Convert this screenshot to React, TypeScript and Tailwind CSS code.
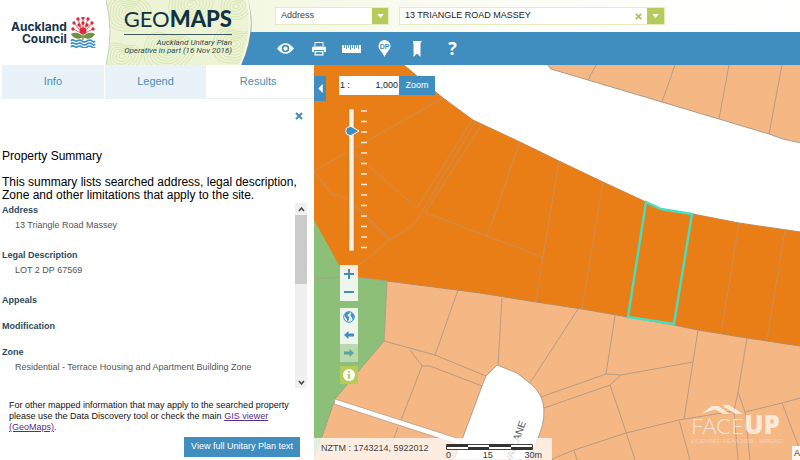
import { useState, type ReactNode } from "react";

type Detail = { label: string; value?: string };

const DETAILS: Detail[] = [
  { label: "Address", value: "13 Triangle Road Massey" },
  { label: "Legal Description", value: "LOT 2 DP 67569" },
  { label: "Appeals" },
  { label: "Modification" },
  { label: "Zone", value: "Residential - Terrace Housing and Apartment Building Zone" },
];

const TABS = ["Info", "Legend", "Results"];

// centre x, centre y, number of rings
const HILLS = [
  [22, 12, 7],
  [62, 50, 8],
  [84, 4, 7],
  [128, 44, 7],
  [16, 56, 6],
  [130, 6, 5],
];

// parcel boundaries inside the terrace housing zone
const TERRACE_LINES = [
  "M314 171 443 98",
  "M314 171 332 194 340 196 352 202 390 240",
  "M353 152 417 208 472 120",
  "M476 121 417 220 412 226 390 240 360 264 347 276",
  "M482 124 425 213 440 218 487 236 543 257",
  "M520 142 487 236",
  "M559 161 543 257 536 302",
  "M603 182 582 309",
  "M739 223 721 333",
  "M785 230 767 340",
];

const SUBURBAN_LINES = [
  "M588 80 596 65",
  "M662 102 675 65",
  "M719 119 729 65",
  "M769 134 782 65",
  "M458 290 435 355",
  "M502 298 498 365",
  "M578 309 530 383",
  "M615 316 606 374",
  "M384 341 435 355 486 376",
  "M410 350 422 366 401 420",
  "M422 366 430 366 482 386",
  "M398 427 386 460",
  "M541 397 606 374 621 375 693 362",
  "M544 408 610 385 621 375",
  "M610 385 626 432 635 460",
  "M698 330 684 419",
  "M550 460 574 450 626 433 679 420 734 411",
  "M574 450 577 460",
  "M679 420 690 460",
  "M747 338 738 392 734 411 738 460",
  "M738 392 745 412 750 460",
  "M745 412 782 403 800 398",
  "M782 403 800 450",
];

const STEMS = [
  [3, 12],
  [4, 6],
  [8, 2],
  [13, 1],
  [18, 2],
  [22, 6],
  [23, 12],
  [9, 8],
  [17, 8],
  [13, 6],
];

function CouncilLogo() {
  return (
    <a href="#home" className="flex items-center gap-[3px] text-[#14324a]">
      <span className="text-right font-['Inter',sans-serif] text-[12px] leading-3 font-bold">
        Auckland
        <br />
        Council
      </span>
      <svg viewBox="0 0 26 31" className="h-[31px] w-[26px]" aria-hidden="true">
        {STEMS.map(([x, y]) => (
          <path key={`${x}-${y}`} d={`M13 17 ${x} ${y}`} stroke="#e2686c" strokeWidth="1" />
        ))}
        {STEMS.map(([x, y]) => (
          <circle key={`${x}-${y}`} cx={x} cy={y} r="1.7" fill="#dc2b39" />
        ))}
        <circle cx="13" cy="14" r="3.4" fill="#dc2b39" />
        <path d="M13 20c-3-5-9-5-12-3 2 5 9 6 12 3zM13 20c3-5 9-5 12-3-2 5-9 6-12 3z" fill="#6c9443" />
        <path d="M13 16v7" stroke="#6c9443" strokeWidth="1.4" />
        <path
          d="M1 24c2-3 4 1 6 0s3-2 5 0 3 1 5 0 3-2 5 0 2 1 3 0M1 27c2-3 4 1 6 0s3-2 5 0 3 1 5 0 3-2 5 0 2 1 3 0M1 30c2-3 4 1 6 0s3-2 5 0 3 1 5 0 3-2 5 0 2 1 3 0"
          fill="none"
          stroke="#3f90bf"
          strokeWidth="1.7"
        />
      </svg>
    </a>
  );
}

function Contours() {
  return (
    <svg
      viewBox="0 0 150 65"
      preserveAspectRatio="none"
      className="absolute inset-0 h-full w-full"
      aria-hidden="true"
    >
      <defs>
        <clipPath id="band">
          <path d="M0 0H141Q149 32 134 65H0Q8 32 0 0z" />
        </clipPath>
      </defs>
      <path d="M142 0Q152 32 136 65H128V0z" fill="#7c8b8c" opacity=".55" />
      <path d="M0 0H141Q149 32 134 65H0Q8 32 0 0z" fill="#edf4d6" />
      <g clipPath="url(#band)" fill="none" stroke="#d3e2ab" strokeWidth=".8">
        {HILLS.map(([x, y, rings]) =>
          Array.from({ length: rings }, (_, i) => {
            const r = 3 + i * 3;
            return (
              <path
                key={`${x}-${i}`}
                d={`M${x - r} ${y}q${r * 0.1} ${-r * 0.9} ${r * 0.8} ${-r * 0.7}t${r * 0.9} ${r * 0.1}q${r * 0.7} ${r * 0.4} ${r * 0.2} ${r}t${-r} ${r * 0.5}q${-r} 0 ${-r * 0.9} ${-r * 0.9}z`}
              />
            );
          }),
        )}
      </g>
      <path d="M0 0Q8 32 0 65" fill="none" stroke="#c9d0bb" strokeWidth="1" />
      <path d="M141 0Q149 32 134 65" fill="none" stroke="#f6faea" strokeWidth="2" />
    </svg>
  );
}

function ToolButton({ label, children }: { label: string; children: ReactNode }) {
  return (
    <button type="button" aria-label={label} className="flex h-[33px] w-[33px] items-center justify-center text-white">
      {children}
    </button>
  );
}

function Caret() {
  return (
    <svg viewBox="0 0 8 5" className="h-1 w-[7px]" aria-hidden="true">
      <path d="M0 0h8L4 5z" fill="#fff" />
    </svg>
  );
}

function Cross({ className }: { className: string }) {
  return (
    <svg viewBox="0 0 8 8" className={className} fill="none" stroke="currentColor" strokeWidth="2" aria-hidden="true">
      <path d="M1 1l6 6M7 1 1 7" />
    </svg>
  );
}

function Toolbar() {
  return (
    <nav aria-label="Map tools" className="flex h-[33px] items-center bg-[#3f8ebf] pl-[31px]">
      <ToolButton label="Layers">
        <svg viewBox="0 0 16 10" className="h-[11px] w-[17px]">
          <path d="M0 5Q8-5 16 5 8 15 0 5z" fill="currentColor" />
          <circle cx="8" cy="5" r="3.5" fill="#3f8ebf" />
          <circle cx="8" cy="5" r="2" fill="currentColor" />
        </svg>
      </ToolButton>
      <ToolButton label="Print">
        <svg viewBox="0 0 14 14" className="h-[14px] w-[14px]" fill="currentColor">
          <path d="M2.5 0h9v4h-1V1h-7v3h-1zM1 4.5h12l1 1V10h-2V8H2v2H0V5.5z" />
          <path d="M2.5 9h9v4.5h-9zM3.7 10.2v2.1h6.6v-2.1z" fillRule="evenodd" />
        </svg>
      </ToolButton>
      <ToolButton label="Measure">
        <svg viewBox="0 0 19 8" className="h-2 w-[19px]">
          <path d="M0 0h19v8H0z" fill="currentColor" />
          <path d="M2.5 0v3M4.5 0v4M6.5 0v3M8.5 0v5M10.5 0v3M12.5 0v4M14.5 0v3M16.5 0v4" stroke="#3f8ebf" strokeWidth=".8" />
        </svg>
      </ToolButton>
      <ToolButton label="Find a deposited plan">
        <svg viewBox="0 0 13 17" className="h-[17px] w-[13px]">
          <path d="M6.5 17C5 12.5.5 10 .5 6a6 6 0 0 1 12 0c0 4-4.5 6.5-6 11z" fill="currentColor" />
          <text x="6.5" y="8.5" textAnchor="middle" fill="#3f8ebf" className="font-['Liberation_Sans',sans-serif] text-[7px] font-bold">
            DP
          </text>
        </svg>
      </ToolButton>
      <ToolButton label="Bookmark">
        <svg viewBox="0 0 9 16" className="h-4 w-[9px]">
          <path d="M0 0h9q-1.5 1-1.5 3v13L4 12.5.5 16V3z" fill="currentColor" />
        </svg>
      </ToolButton>
      <ToolButton label="Help">
        <span className="pl-1 font-['Open_Sans',sans-serif] text-[18px] font-bold">?</span>
      </ToolButton>
    </nav>
  );
}

function Header() {
  const [query, setQuery] = useState("13 TRIANGLE ROAD MASSEY");
  return (
    <header className="flex h-[65px]">
      <div className="flex w-[106px] shrink-0 items-center pl-[11px]">
        <CouncilLogo />
      </div>
      <div className="relative z-10 flex w-[150px] shrink-0 flex-col items-end pt-1 pr-6">
        <Contours />
        <p className="relative border-b border-[#3f5b5f] font-['Lato',sans-serif] text-[22px] leading-[30px] text-[#123243]">
          GEO<span className="font-black">MAPS</span>
        </p>
        <p className="relative pt-1 text-right font-['Roboto',sans-serif] text-[8px] leading-2 whitespace-nowrap text-[#2f4a4c] italic">
          Auckland Unitary Plan
          <br />
          Operative in part (16 Nov 2016)
        </p>
      </div>
      <div className="-ml-[18px] flex-1">
        <div className="flex h-8 items-center gap-[10px] bg-linear-to-r from-[#f3f8e2] via-[#fcfdf6] to-white pl-[37px]">
          <div className="relative flex h-[18px] w-[114px] border border-[#e3edc0]">
            <select aria-label="Search by" className="w-full appearance-none bg-white px-[5px] text-[9px] text-[#444]">
              <option>Address</option>
            </select>
            <span className="pointer-events-none absolute inset-y-0 right-0 flex w-4 items-center justify-center bg-[#b5cc5a]">
              <Caret />
            </span>
          </div>
          <form className="flex h-[18px] w-[266px] border border-[#e3edc0] bg-white" onSubmit={(e) => e.preventDefault()}>
            <input
              aria-label="Address to search for"
              value={query}
              onChange={(e) => setQuery(e.target.value)}
              className="min-w-0 flex-1 px-[5px] text-[9px] text-[#222] outline-none"
            />
            <button type="button" aria-label="Clear" onClick={() => setQuery("")} className="flex w-[18px] items-center justify-center text-[#a9c44d]">
              <Cross className="h-[7px] w-[7px]" />
            </button>
            <button type="submit" aria-label="Search" className="flex w-[17px] items-center justify-center bg-[#b5cc5a]">
              <Caret />
            </button>
          </form>
        </div>
        <Toolbar />
      </div>
    </header>
  );
}

function ScrollArrow({ d, label }: { d: string; label: string }) {
  return (
    <button type="button" aria-label={label} className="flex h-3 w-full items-center justify-center">
      <svg viewBox="0 0 7 5" className="h-[5px] w-[7px]" fill="none" stroke="#444" strokeWidth="1.5">
        <path d={d} />
      </svg>
    </button>
  );
}

function ResultsPanel() {
  const [tab, setTab] = useState("Results");
  return (
    <aside className="flex w-[314px] shrink-0 flex-col bg-white">
      <div role="tablist" className="flex h-[34px] gap-px border-b border-[#e6f1f8] pr-[5px] pl-[2px]">
        {TABS.map((name) => (
          <button
            key={name}
            type="button"
            role="tab"
            aria-selected={tab === name}
            onClick={() => setTab(name)}
            className={`flex-1 text-[11px] text-[#4a8fb5] ${tab === name ? "bg-white" : "bg-[#e9f1f9]"}`}
          >
            {name}
          </button>
        ))}
      </div>
      <div className="flex justify-end pt-[13px] pr-[11px]">
        <button type="button" aria-label="Close results" className="text-[#3f8ebf]">
          <Cross className="h-2 w-2" />
        </button>
      </div>
      <div className="pt-7 pl-[2px] text-black">
        <h2 className="text-[12px] leading-4">Property Summary</h2>
        <p className="pt-3 text-[12px] leading-[13px]">
          This summary lists searched address, legal description,
          <br />
          Zone and other limitations that apply to the site.
        </p>
      </div>
      <div className="mr-[7px] flex h-[186px] pt-px">
        <dl className="flex-1 pl-[2px] text-[9px] leading-[15px]">
          {DETAILS.map((item) => (
            <div key={item.label}>
              <dt className="font-bold text-[#2c4a5e]">{item.label}</dt>
              <dd className={`pl-[13px] text-[#555] ${item.value ? "h-[30px]" : "h-[11px]"}`}>{item.value}</dd>
            </div>
          ))}
        </dl>
        <div className="flex w-[12px] flex-col bg-[#f0f0f0]">
          <ScrollArrow label="Scroll up" d="M1 4l2.5-3L6 4" />
          <div className="h-[69px] bg-[#cbcbcb]" />
          <div className="flex-1" />
          <ScrollArrow label="Scroll down" d="M1 1l2.5 3L6 1" />
        </div>
      </div>
      <p className="px-[9px] pt-3 text-[9px] leading-[11px] text-[#111]">
        For other mapped information that may apply to the searched property
        <br />
        please use the Data Discovery tool or check the main{" "}
        <a href="#gis" className="text-[#5b2d82] underline">
          GIS viewer
          <br />
          (GeoMaps)
        </a>
        .
      </p>
      <div className="flex justify-end pt-1 pr-[14px]">
        <button type="button" className="h-5 w-[116px] bg-[#3f8ebf] text-[9px] text-white">
          View full Unitary Plan text
        </button>
      </div>
    </aside>
  );
}

function ParcelMap() {
  return (
    <svg
      viewBox="314 65 486 395"
      preserveAspectRatio="xMinYMin slice"
      className="absolute inset-0 h-full w-full"
      role="img"
      aria-label="Zoning map"
    >
      <path d="M314 65h486v395H314z" fill="#f5b783" />
      <path
        d="M404 65 443 98 473 120 520 142 559 161 603 182 646 202 661 209 693 214 739 223 801 232V143L783 139 769 134 719 119 662 102 588 80 551 69 547 64H404z"
        fill="#fff"
        stroke="#a89c8c"
      />
      <path
        d="M314 65H404L443 98 473 120 520 142 559 161 603 182 646 202 661 209 693 214 739 223 800 232V346L747 338 698 330 674 325 628 317 582 309 536 302 480 293 387 281H314z"
        fill="#ea7e16"
      />
      <path d="M387 281 480 293 536 302 582 309 628 317 674 325 698 330 747 338 800 346" fill="none" stroke="#b58b62" />
      <path d="M314 220 339 265 347 276 387 281 384 341 335 399 322 437 314 460z" fill="#8cc079" />
      <path d="M314 279 340 277M347 276 387 281 384 341 335 399 322 437" fill="none" stroke="#a3a585" />
      <g fill="none" stroke="#c98f58">
        {TERRACE_LINES.map((d) => (
          <path key={d} d={d} />
        ))}
      </g>
      <g fill="none" stroke="#b89c84">
        {SUBURBAN_LINES.map((d) => (
          <path key={d} d={d} />
        ))}
      </g>
      <path d="M335 399 463 440V446L334 404z" fill="#fff" stroke="#b89c84" strokeWidth=".8" />
      <path
        d="M486 376 497 365 517 373 531 384Q541 393 543 403 546 416 540 433L529 460H454L463 437 482 386z"
        fill="#fff"
        stroke="#b0a090"
      />
      <path d="M646 202 661 209 692 214 674 324 628 317z" fill="none" stroke="#45e0c0" strokeWidth="2.4" />
      <text transform="translate(511 464) rotate(-70)" fill="#555" className="text-[10px]">
        VAI LANE
      </text>
    </svg>
  );
}

function ZoomSlider() {
  const [level, setLevel] = useState(2);
  const y = 2 + level * 10.5;
  return (
    <div className="relative mt-3 ml-[30px] h-[144px] w-6">
      <svg viewBox="0 0 24 144" className="h-full w-full" aria-hidden="true">
        <path d="M5 1h5v142H5z" fill="#fff3e4" stroke="#c9762a" strokeWidth=".6" />
        {Array.from({ length: 14 }, (_, i) => (
          <path key={i} d={`M17 ${3 + i * 10.5}h6`} stroke="#fdeedd" strokeWidth="1.5" />
        ))}
        <path
          d={`M3 ${y - 3.5}Q7 ${y - 6} 10 ${y - 3}L15 ${y} 10 ${y + 3}Q7 ${y + 6} 3 ${y + 3.5} 0 ${y} 3 ${y - 3.5}z`}
          fill="#3f8ebf"
          stroke="#fff"
        />
      </svg>
      <input
        type="range"
        aria-label="Zoom level"
        min={0}
        max={13}
        value={level}
        onChange={(e) => setLevel(Number(e.target.value))}
        className="absolute inset-0 h-full w-4 opacity-0 [writing-mode:vertical-lr]"
      />
    </div>
  );
}

function MapButton({ label, className = "", children }: { label: string; className?: string; children: ReactNode }) {
  return (
    <button type="button" aria-label={label} className={`flex h-[18px] w-[18px] items-center justify-center text-[#3f8ebf] ${className}`}>
      {children}
    </button>
  );
}

function MapControls() {
  const [scale, setScale] = useState("1,000");
  return (
    <div className="relative flex flex-col items-start pt-[11px]">
      <div className="flex h-5 items-start gap-[13px]">
        <button type="button" aria-label="Hide panel" className="flex h-[25px] w-3 items-center justify-center bg-[#3f8ebf]">
          <svg viewBox="0 0 5 10" className="h-[9px] w-[5px]">
            <path d="M5 0v10L0 5z" fill="#fff" />
          </svg>
        </button>
        <form className="flex h-[19px] text-[9px]" onSubmit={(e) => e.preventDefault()}>
          <label className="flex w-[60px] items-center bg-white px-px text-[#222]">
            1&nbsp;:
            <input value={scale} onChange={(e) => setScale(e.target.value)} className="min-w-0 flex-1 text-right outline-none" />
          </label>
          <button type="submit" className="w-9 bg-[#3f8ebf] text-white">
            Zoom
          </button>
        </form>
      </div>
      <ZoomSlider />
      <div className="mt-[13px] ml-[26px] bg-white/85">
        <MapButton label="Zoom in">
          <svg viewBox="0 0 10 10" className="h-[10px] w-[10px]" stroke="currentColor" strokeWidth="2">
            <path d="M5 0v10M0 5h10" />
          </svg>
        </MapButton>
        <MapButton label="Zoom out">
          <svg viewBox="0 0 10 10" className="h-[10px] w-[10px]" stroke="currentColor" strokeWidth="2">
            <path d="M0 5h10" />
          </svg>
        </MapButton>
      </div>
      <div className="mt-[7px] ml-[26px]">
        <MapButton label="Full extent" className="bg-white/85">
          <svg viewBox="0 0 12 12" className="h-3 w-3">
            <circle cx="6" cy="6" r="5.3" fill="#eef6fa" stroke="currentColor" />
            <path
              d="M2 2.5 5 .8 7 1.5 6 3 4.5 3.5 4.7 5 6.5 6.5 6 8.5 4.8 10.5 3.8 8 1.8 5.5zM8 2 10 2.7 11 5.5 10.3 8 9.3 9 9 6.5 7.5 5z"
              fill="currentColor"
            />
          </svg>
        </MapButton>
        <MapButton label="Previous extent" className="bg-white/85">
          <svg viewBox="0 0 10 8" className="h-2 w-[10px]" fill="currentColor">
            <path d="M0 4 4.5 0v2.5H10v3H4.5V8z" />
          </svg>
        </MapButton>
        <MapButton label="Next extent" className="bg-white/50 opacity-80">
          <svg viewBox="0 0 10 8" className="h-2 w-[10px]" fill="#4f9f9d">
            <path d="M10 4 5.500 0v2.5H0v3h5.500V8z" />
          </svg>
        </MapButton>
      </div>
      <div className="mt-1 ml-[26px]">
        <MapButton label="Identify" className="bg-[#b5cc5a]">
          <svg viewBox="0 0 12 12" className="h-3 w-3">
            <circle cx="6" cy="6" r="6" fill="#fff" />
            <path d="M5 2h2v1.800H5zM4.300 5H7v3.500h.8v1H4.300v-1H5V6h-.7z" fill="#b5cc5a" />
          </svg>
        </MapButton>
      </div>
    </div>
  );
}

function ScaleBar() {
  return (
    <div className="w-24 self-end">
      <svg viewBox="0 0 88 6" className="h-[6px] w-[88px]" aria-hidden="true">
        <path d="M.5.5h86v5H.5z" fill="#fff" stroke="#444" />
        <path d="M1 0h21v3H1zM22 3h21v3H22zM43 0h22v3H43zM65 3h21v3H65z" fill="#333" />
      </svg>
      <div className="flex justify-between text-[9px] leading-[10px] text-[#333]">
        <span>0</span>
        <span>15</span>
        <span>30m</span>
      </div>
    </div>
  );
}

function Watermark() {
  return (
    <div className="absolute right-[17px] bottom-4 flex w-[92px] flex-col text-white/70">
      <svg viewBox="0 0 92 10" className="h-[10px] w-full" aria-hidden="true">
        <path d="M10 10 21 2l4 3M20 2h7l12 8h-7L22 4zM32 1h6l14 9h-7L33 3z" fill="currentColor" />
      </svg>
      <p className="flex items-baseline leading-5">
        <span className="font-['Lato',sans-serif] text-[22px] font-light">FACE</span>
        <span className="font-['Open_Sans',sans-serif] text-[26px] font-extrabold">UP</span>
      </p>
      <p className="pt-[3px] text-[6px] leading-[5px] whitespace-nowrap text-white/40">LICENSED REAA 2008 - MREINZ</p>
    </div>
  );
}

export default function App() {
  return (
    <div className="flex min-h-screen flex-col bg-white font-['Liberation_Sans',Arial,sans-serif]">
      <Header />
      <div className="flex flex-1">
        <ResultsPanel />
        <main className="relative flex min-w-0 flex-1 flex-col justify-between overflow-hidden">
          <ParcelMap />
          <MapControls />
          <Watermark />
          <footer className="relative flex items-end justify-between">
            <div className="flex h-[22px] w-[238px] items-center bg-white/75 pl-[7px]">
              <p className="w-[125px] text-[9px] text-[#444]">NZTM : 1743214, 5922012</p>
              <ScaleBar />
            </div>
            <span className="bg-white/90 pl-[2px] text-[9px] leading-[14px] text-[#333]">A</span>
          </footer>
        </main>
      </div>
    </div>
  );
}
